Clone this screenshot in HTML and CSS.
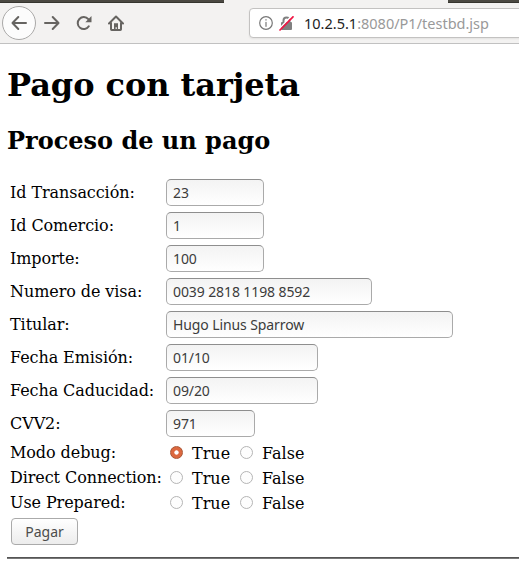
FILE: index.html
```
<!DOCTYPE html>
<html lang="es">
<head>
<meta charset="utf-8">
<title>Pago con tarjeta</title>
<link rel="stylesheet" href="styles.css">
</head>
<body>
<header class="browser">
  <div class="tabs"><span class="tab-dark"></span><span class="tab-active"></span><span class="tab-dark"></span></div>
  <div class="toolbar">
    <span class="back"><svg width="16" height="16" viewBox="0 0 16 16"><path d="M15 8H2M7.3 2L1.500 8l5.800 6"/></svg></span>
    <svg class="forward" width="16" height="16" viewBox="0 0 16 16"><path d="M1 8h13M8.700 2l5.800 6-5.800 6"/></svg>
    <svg class="reload" width="16" height="16" viewBox="0 0 16 16"><path d="M12.800 11.300A6 6 0 1 1 12.300 4.200"/><path class="solid" d="M15.500 1v6.200H9.300z"/></svg>
    <svg class="home" width="16" height="16" viewBox="0 0 16 16"><path d="M1 8.500L8 1.500l7 7M3 8v6.300c0 .4.300.7.7.7h8.600c.4 0 .7-.3.700-.7V8"/><path class="solid" d="M6 14V8.300h4V14H8.800v-1.800H7.600V14z"/></svg>
    <div class="address">
      <svg class="info" width="14" height="14" viewBox="0 0 14 14"><circle cx="7" cy="7" r="6.300"/><path d="M7 6.300v4M7 3.500v.6"/></svg>
      <svg class="lock" width="15" height="15" viewBox="0 0 15 15"><path class="shackle" d="M4.500 7V4.500a3 3 0 0 1 6 0V7"/><rect x="2" y="6" width="11" height="8" rx="1"/><path class="gap" d="M0 13L12.500 0"/><path class="slash" d="M1 14L14 .8"/></svg>
      <span class="url"><b>10.2.5.1</b>:8080/P1/testbd.jsp</span>
    </div>
  </div>
</header>
<main>
  <h1>Pago con tarjeta</h1>
  <h2>Proceso de un pago</h2>
  <form>
    <div class="row"><label for="id">Id Transacción:</label><input id="id" class="short" type="text" value="23"></div>
    <div class="row"><label for="shop">Id Comercio:</label><input id="shop" class="short" type="text" value="1"></div>
    <div class="row"><label for="amount">Importe:</label><input id="amount" class="short" type="text" value="100"></div>
    <div class="row"><label for="card">Numero de visa:</label><input id="card" class="card" type="text" value="0039 2818 1198 8592"></div>
    <div class="row"><label for="holder">Titular:</label><input id="holder" class="holder" type="text" value="Hugo Linus Sparrow"></div>
    <div class="row"><label for="issued">Fecha Emisión:</label><input id="issued" class="date" type="text" value="01/10"></div>
    <div class="row"><label for="expires">Fecha Caducidad:</label><input id="expires" class="date" type="text" value="09/20"></div>
    <div class="row"><label for="cvv">CVV2:</label><input id="cvv" class="cvv" type="text" value="971"></div>
    <div class="row choice"><span>Modo debug:</span><div class="options"><label><input type="radio" name="debug" checked>True</label><label><input type="radio" name="debug">False</label></div></div>
    <div class="row choice"><span>Direct Connection:</span><div class="options"><label><input type="radio" name="direct">True</label><label><input type="radio" name="direct">False</label></div></div>
    <div class="row choice"><span>Use Prepared:</span><div class="options"><label><input type="radio" name="prepared">True</label><label><input type="radio" name="prepared">False</label></div></div>
    <button type="button">Pagar</button>
  </form>
  <hr>
</main>
</body>
</html>
```
FILE: styles.css
```
* { box-sizing: border-box; }
body { margin: 0; background: #fff; color: #000; font: 16px/19px "DejaVu Serif", serif; overflow: hidden; }
.browser { height: 44px; background: #f3f2f1; border-bottom: 1px solid #c1c1c1; }
.tabs { display: grid; grid-template-columns: 224px 224px 1fr; height: 3px; }
.tab-dark { background: #4b4942; border-bottom: 1px solid #36352f; }
.toolbar { display: flex; align-items: center; height: 40px; padding-left: 2px; }
.toolbar svg { flex: none; fill: none; stroke: #666461; stroke-width: 2; stroke-linecap: round; stroke-linejoin: round; }
.toolbar .solid { fill: #666461; stroke: none; }
.back { display: flex; flex: none; align-items: center; justify-content: center; width: 34px; height: 34px; border: 1px solid #aaa9a8; border-radius: 50%; background: #fcfcfc; }
.forward { margin-left: 8px; }
.reload { margin-left: 16px; }
.home { margin-left: 16px; }
.address { display: flex; align-items: center; width: 290px; height: 30px; flex: none; margin-left: 125px; padding-left: 9px; background: #fff; border: 1px solid #c3c2c1; border-radius: 4px; box-shadow: 0 1px 2px #0001; }
.toolbar .info { stroke: #777; stroke-width: 1.200; }
.address .lock { margin-left: 6px; }
.toolbar .lock rect { fill: #808080; stroke: none; }
.toolbar .lock .shackle { stroke: #808080; }
.toolbar .lock .gap { stroke: #fff; stroke-width: 1.500; }
.toolbar .lock .slash { stroke: #f01644; stroke-width: 1.700; }
.url { margin-left: 10px; font: 14.500px/20px "Noto Sans", sans-serif; color: #999; white-space: nowrap; }
.url b { font-weight: 400; color: #222; }
main { padding: 0 0 0 7px; }
h1 { margin: 22px 0 0; font-size: 32px; line-height: 38px; letter-spacing: -0.06px; }
h2 { margin: 23px 0 0; font-size: 24px; line-height: 28px; }
form { margin-top: 22px; padding-left: 3px; }
.row { display: grid; grid-template-columns: 156px 1fr; align-items: center; height: 33px; padding-bottom: 2px; white-space: nowrap; }
.row > label { padding-bottom: 1px; }
.row > label, .row > span { letter-spacing: -0.08px; }
input[type="text"] { height: 27px; padding: 0 6px 1px; border: 1px solid #aaa; border-top-color: #8e8e8e; border-radius: 5px; background: linear-gradient(#f3f3f3, #fff); color: #3c3c3c; font: 14px/20px "Noto Sans", sans-serif; letter-spacing: -0.1px; }
.short { width: 98px; }
.card { width: 206px; }
.holder { width: 287px; }
.date { width: 152px; }
.cvv { width: 89px; }
.choice { height: 25px; }
.options { display: flex; padding: 1px 0 0 4px; }
.options label { display: flex; width: 70px; }
input[type="radio"] { appearance: none; flex: none; width: 13px; height: 13px; margin: 2px 9px 0 0; border: 1px solid #b5b5b5; border-radius: 50%; background: #fdfdfd; }
input[type="radio"]:checked { border-color: #a95635; background: radial-gradient(circle, #fff 0 1.800px, #dc683f 2.500px); }
button { display: block; width: 67px; height: 27px; margin: 2px 0 0 1px; padding: 0; border: 1px solid #aaa; border-radius: 4px; background: linear-gradient(#fff, #ececec); color: #4c4c4c; font: 14px/20px "Noto Sans", sans-serif; }
hr { height: 2px; margin: 12px 0 0; border: 0; background: #555; border-bottom: 1px solid #777; }
```
